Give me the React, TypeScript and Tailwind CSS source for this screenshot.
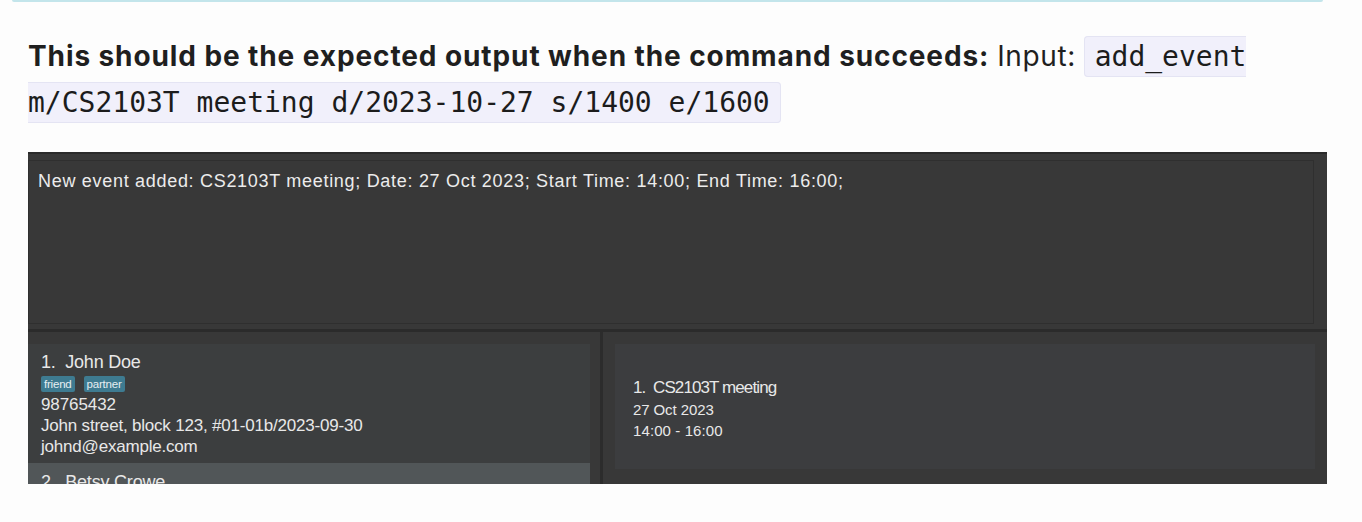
import React from "react"

const persons = [
  {
    id: 1,
    name: "John Doe",
    tags: ["friend", "partner"],
    phone: "98765432",
    address: "John street, block 123, #01-01b/2023-09-30",
    email: "johnd@example.com",
  },
]

function PersonCard() {
  const p = persons[0]
  return (
    <div className="h-[119px] w-[562px] bg-[#3c3e3f] pl-[13px] pt-[7px] text-[#e8e8e8]">
      <p className="text-[18px] leading-[22px] tracking-[-0.2px]">
        {p.id}.&nbsp; {p.name}
      </p>
      <div className="mt-[3px] mb-[2px] flex gap-[9px]">
        {p.tags.map((t) => (
          <span
            key={t}
            className="rounded-[2px] bg-[#3e7b91] px-[3px] text-[11.5px] leading-[16px] tracking-[-0.2px] text-[#e6eef2]"
          >
            {t}
          </span>
        ))}
      </div>
      <p className="text-[17px] leading-[21px] tracking-[-0.1px]">{p.phone}</p>
      <p className="text-[17px] leading-[21px] tracking-[-0.2px]">{p.address}</p>
      <p className="text-[17px] leading-[21px] tracking-[-0.2px]">{p.email}</p>
    </div>
  )
}

export default function App() {
  return (
    <div className="h-[522px] w-full overflow-hidden bg-[#fdfdfd]">
      {/* end of the previous admonition block */}
      <div className="mx-[12px] h-[2px] w-[1311px] rounded-b-full bg-[#c3e5eb]" />

      <p
        className="mt-[31px] w-[1310px] pl-[28px] text-[28px] leading-[46px] text-[#1f1f1f]"
        style={{ fontFamily: "Inter, 'Liberation Sans', sans-serif" }}
      >
        <span className="font-bold tracking-[0.9px]">
          This should be the expected output when the command succeeds:
        </span>{" "}
        <span className="tracking-[0.6px]">Input:</span>{" "}
        <code
          className="rounded-[4px] border border-[#e4e4f3] bg-[#f1f0fb] px-[10px] py-[3px] text-[28px] leading-[30px] text-[#1c1c1c]"
          style={{ fontFamily: "'DejaVu Sans Mono', monospace" }}
        >
          add_event m/CS2103T meeting d/2023-10-27 s/1400 e/1600
        </code>
      </p>

      {/* app screenshot */}
      <div
        className="mt-[27px] ml-[28px] flex h-[332px] w-[1299px] flex-col bg-[#383838]"
        style={{ fontFamily: "'Liberation Sans', Arial, sans-serif" }}
      >
        <div className="h-[2px] bg-[#2a2a2a]" />
        <div className="mt-[6px] h-[164px] w-[1286px] border border-[#2f2f2f] bg-[#383838] px-[9px] pt-[9px]">
          <p className="text-[18px] leading-[22px] tracking-[0.7px] text-[#ececec]">
            New event added: CS2103T meeting; Date: 27 Oct 2023; Start Time: 14:00; End Time: 16:00;
          </p>
        </div>
        <div className="mt-[5px] h-[3px] bg-[#2b2b2b]" />
        <div className="flex flex-1 overflow-hidden">
          <div className="w-[572px] pt-[12px]">
            <PersonCard />
            <div className="h-[40px] w-[562px] bg-[#515658] pl-[13px] pt-[8px] text-[18px] leading-[22px] tracking-[-0.2px] text-[#e8e8e8]">
              2.&nbsp; Betsy Crowe
            </div>
          </div>
          <div className="w-[3px] bg-[#2c2c2c]" />
          <div className="flex-1 pl-[12px] pr-[12px] pt-[12px]">
            <div className="flex h-[125px] flex-col justify-center bg-[#3c3d3f] pl-[18px] pt-[4px] text-[#e8e8e8]">
              <p className="text-[17px] leading-[22px] tracking-[-0.9px]">1.&nbsp; CS2103T meeting</p>
              <p className="text-[15px] leading-[21px] tracking-[-0.1px]">27 Oct 2023</p>
              <p className="text-[15px] leading-[21px] tracking-[0.1px]">14:00 - 16:00</p>
            </div>
          </div>
        </div>
      </div>
    </div>
  )
}
